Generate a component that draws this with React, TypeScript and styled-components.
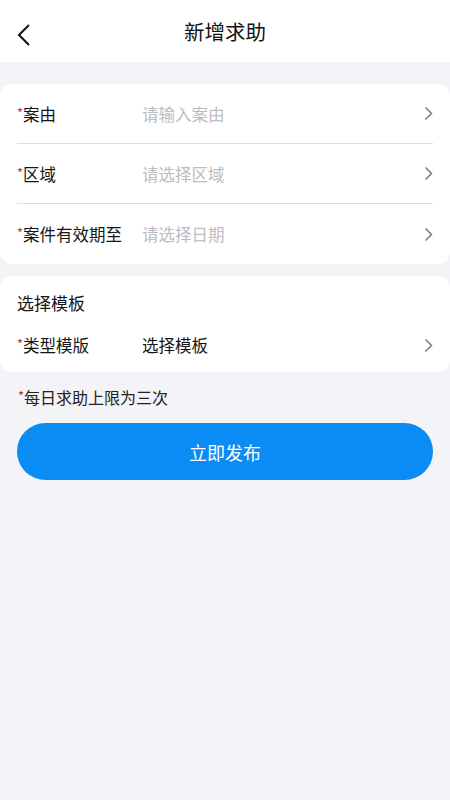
import styled, { createGlobalStyle } from "styled-components"

const GlobalStyle = createGlobalStyle`
  html, body {
    margin: 0;
    padding: 0;
    background: #f4f3f7;
    font-family: "Noto Sans CJK SC", "Noto Sans", sans-serif;
  }
  * {
    box-sizing: border-box;
  }
`

const Page = styled.div`
  min-height: 800px;
  background: #f4f3f7;
`

const Header = styled.div`
  height: 62px;
  background: #ffffff;
  display: flex;
  align-items: center;
  justify-content: center;
  position: relative;
`

const BackButton = styled.div`
  position: absolute;
  left: 17px;
  top: 22px;
  width: 22px;
  height: 26px;
  display: flex;
  align-items: center;
`

const Title = styled.h1`
  margin: 0;
  font-size: 20.5px;
  font-weight: 400;
  color: #111;
`

const Content = styled.div`
  padding-top: 22px;
  display: flex;
  flex-direction: column;
`

const Card = styled.div<{ $gap?: number; $bottom?: number }>`
  background: #ffffff;
  border-radius: 12px;
  padding: 0 17px ${p => p.$bottom ?? 0}px;
  margin-top: ${p => p.$gap ?? 0}px;
`

const Row = styled.div<{ $divider?: boolean; $height?: number }>`
  height: ${p => p.$height ?? 60}px;
  display: flex;
  align-items: center;
  border-bottom: ${p => (p.$divider ? "1px solid #dcdbe0" : "none")};
`

const Label = styled.div`
  width: 125px;
  font-size: 16.5px;
  color: #151515;
  white-space: nowrap;
`

const Star = styled.span`
  color: #b8303f;
  font-size: 13px;
  vertical-align: 3px;
`

const Value = styled.div<{ $placeholder?: boolean }>`
  flex: 1;
  font-size: 16.5px;
  color: ${p => (p.$placeholder ? "#bdbcc2" : "#151515")};
`

const Chevron = styled.div`
  width: 16px;
  display: flex;
  justify-content: flex-end;
`

const SectionTitle = styled.div`
  height: 52px;
  display: flex;
  align-items: center;
  font-size: 17px;
  color: #151515;
`

const Notice = styled.div`
  padding: 0 18px;
  margin-top: 11px;
  font-size: 16px;
  color: #222;
  height: 26px;
  line-height: 26px;
`

const SubmitButton = styled.button`
  margin: 14px 17px 0;
  height: 57px;
  border: none;
  border-radius: 29px;
  background: #0b8cf4;
  color: #ffffff;
  font-size: 18px;
  font-family: inherit;
`

const ArrowIcon = () => (
  <svg width="9" height="15" viewBox="0 0 9 15">
    <path d="M1.5 1.5 L7.5 7.5 L1.5 13.5" fill="none" stroke="#7b7b80" strokeWidth="1.5" />
  </svg>
)

const fields = [
  { label: "案由", value: "请输入案由" },
  { label: "区域", value: "请选择区域" },
  { label: "案件有效期至", value: "请选择日期" },
]

const App = () => {
  return (
    <Page>
      <GlobalStyle />
      <Header>
        <BackButton>
          <svg width="14" height="24" viewBox="0 0 14 24">
            <path d="M12 2 L2 12 L12 22" fill="none" stroke="#111" strokeWidth="2" />
          </svg>
        </BackButton>
        <Title>新增求助</Title>
      </Header>
      <Content>
        <Card>
          {fields.map((f, i) => (
            <Row key={f.label} $divider={i < fields.length - 1}>
              <Label><Star>*</Star>{f.label}</Label>
              <Value $placeholder>{f.value}</Value>
              <Chevron><ArrowIcon /></Chevron>
            </Row>
          ))}
        </Card>
        <Card $gap={12} $bottom={10}>
          <SectionTitle>选择模板</SectionTitle>
          <Row $height={34}>
            <Label><Star>*</Star>类型模版</Label>
            <Value>选择模板</Value>
            <Chevron><ArrowIcon /></Chevron>
          </Row>
        </Card>
        <Notice><Star>*</Star>每日求助上限为三次</Notice>
        <SubmitButton>立即发布</SubmitButton>
      </Content>
    </Page>
  )
}

export default App
